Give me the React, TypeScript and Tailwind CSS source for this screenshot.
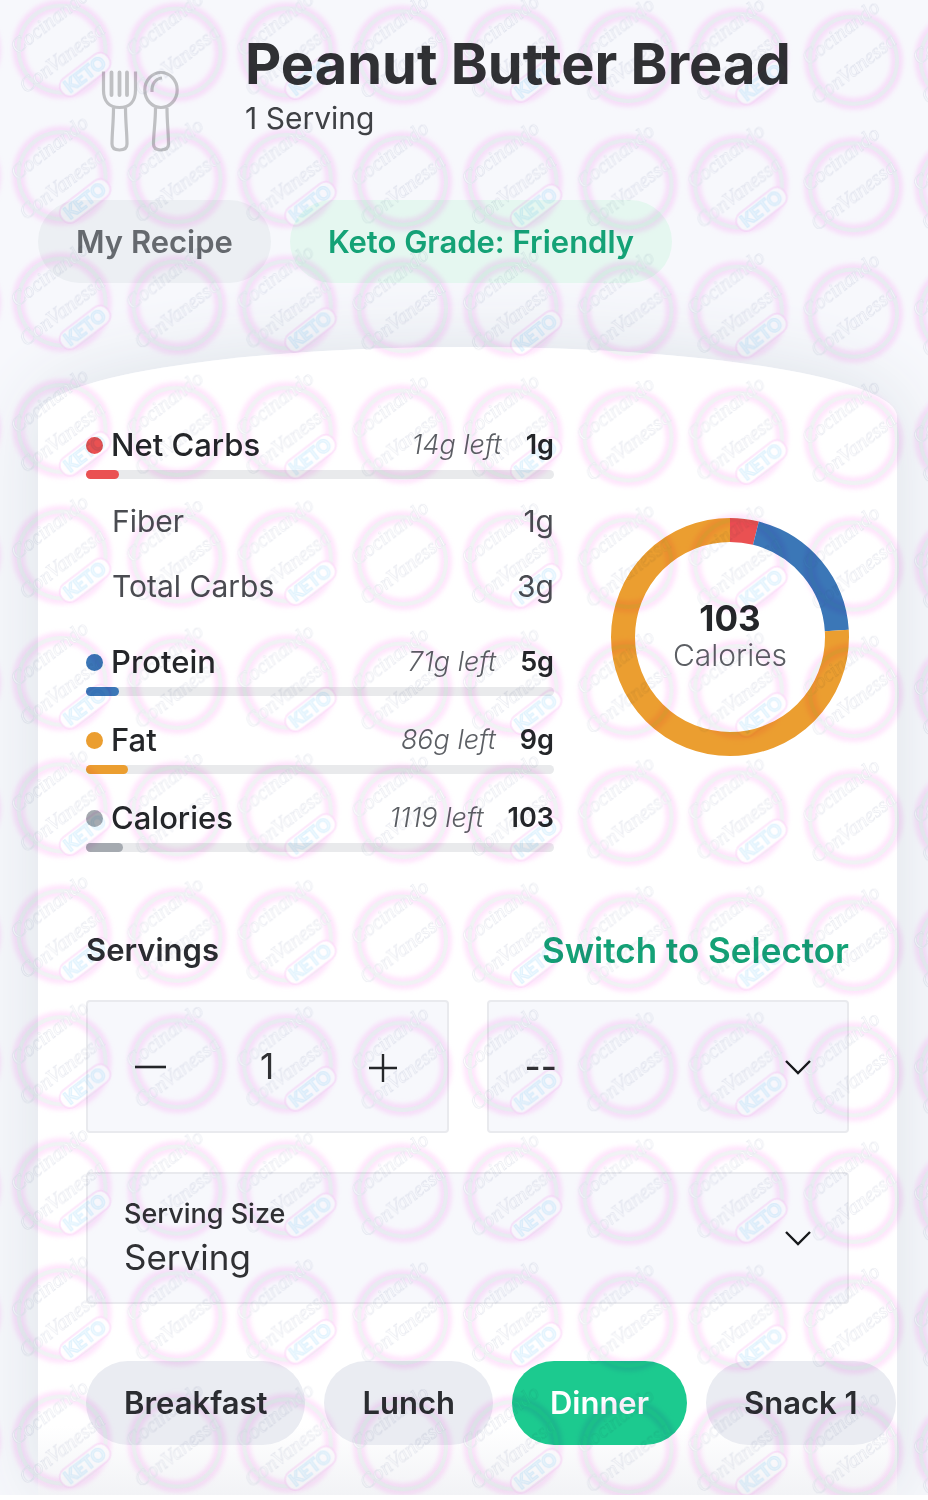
import { useState } from "react";

type Macro = {
  label: string;
  left: string;
  value: string;
  percent: number;
  dot: string;
};

const carbs: Macro = { label: "Net Carbs", left: "14g left", value: "1g", percent: 7, dot: "bg-[#ea5152]" };

const carbDetails = [
  { label: "Fiber", value: "1g" },
  { label: "Total Carbs", value: "3g" },
];

const macros: Macro[] = [
  { label: "Protein", left: "71g left", value: "5g", percent: 7, dot: "bg-[#3b77b7]" },
  { label: "Fat", left: "86g left", value: "9g", percent: 9, dot: "bg-[#eb9e30]" },
  { label: "Calories", left: "1119 left", value: "103", percent: 8, dot: "bg-[#a5aab0]" },
];

const meals = ["Breakfast", "Lunch", "Dinner", "Snack 1"];

function MacroRow({ macro }: { macro: Macro }) {
  return (
    <div>
      <div className="flex h-10 items-center">
        <span className={`mr-2 size-[17px] shrink-0 rounded-full ${macro.dot}`} />
        <span className="text-[31px] leading-10 font-medium text-[#242629]">{macro.label}</span>
        <span className="ml-auto text-[27px] leading-10 font-light text-[#5c5f64] italic">{macro.left}</span>
        <span className="ml-6 text-[27px] leading-10 font-semibold text-[#242629]">{macro.value}</span>
      </div>
      <div className="mt-[5px] h-[9px] rounded-full bg-[#e9eaec]">
        <div className={`h-full rounded-full ${macro.dot}`} style={{ width: `${macro.percent}%` }} />
      </div>
    </div>
  );
}

function Utensils() {
  return (
    <svg viewBox="98 66 84 90" className="h-[90px] w-[84px]" fill="none" stroke="#bfc0c3" strokeWidth="3.2" strokeLinecap="butt" aria-hidden="true">
      <path d="M103.500 71.500V90C103.500 101 109 107.500 119.500 107.500S135.500 101 135.500 90V71.500" />
      <path d="M111.500 72.500V95M119.500 72.500V95M127 72.500V95" strokeLinecap="round" strokeWidth="3.800" />
      <path d="M113.500 108C113.500 122 112 133 112 144C112 148 115 150 119.500 150S127 148 127 144C127 133 125.500 122 125.500 108" />
      <ellipse cx="161" cy="90" rx="16.200" ry="17.500" />
      <path d="M152 92C151.500 84 155.500 78.500 162 78" />
      <path d="M155.500 108C155.500 122 153.500 133 153.500 144C153.500 148 156.500 150 161 150S168.500 148 168.500 144C168.500 133 167 122 167 108" />
    </svg>
  );
}

function Chevron() {
  return (
    <svg viewBox="0 0 26 16" className="pointer-events-none absolute top-1/2 right-9 h-4 w-[26px] -translate-y-1/2" fill="none" stroke="#17191c" strokeWidth="2.4" aria-hidden="true">
      <path d="M1 2L13 14L25 2" />
    </svg>
  );
}

function Donut() {
  const segments = [
    { color: "#ea5152", from: 0, size: 3.9 },
    { color: "#3b77b7", from: 3.9, size: 20.1 },
    { color: "#eb9e30", from: 24, size: 76 },
  ];
  return (
    <div className="mb-1 grid size-[238px] shrink-0 place-items-center">
      <svg viewBox="0 0 238 238" className="col-start-1 row-start-1 size-full -rotate-90" fill="none" aria-hidden="true">
        {segments.map((s) => (
          <circle
            key={s.color}
            cx="119"
            cy="119"
            r="107"
            stroke={s.color}
            strokeWidth="24"
            pathLength="100"
            strokeDasharray={`${s.size} ${100 - s.size}`}
            strokeDashoffset={-s.from}
          />
        ))}
      </svg>
      <div className="col-start-1 row-start-1 text-center">
        <div className="text-[35px] leading-[37px] font-bold text-[#242629]">103</div>
        <div className="text-[30px] leading-[37px] font-light text-[#5c5f64]">Calories</div>
      </div>
    </div>
  );
}

function Badge({ keto }: { keto?: boolean }) {
  return (
    <g>
      <circle r="43.500" stroke="#ffa3f5" strokeWidth="12" fill="none" opacity="0.28" filter="url(#glow)" />
      <circle r="43.500" stroke="#eff4f3" strokeWidth="4" fill="none" opacity="0.9" />
      <g
        fill="#ffffff"
        stroke="#e6e8ef"
        strokeWidth="0.6"
        opacity="0.9"
        fontFamily="'Liberation Serif', serif"
        fontStyle="italic"
        fontSize="21"
      >
        <text transform="translate(-45 6) rotate(-38)">Cocinando</text>
        <text transform="translate(-36 45) rotate(-38)">Con</text>
        <text transform="translate(-9 24) rotate(-38)">Vanessa</text>
      </g>
      {keto && (
        <g transform="translate(23 25) rotate(-38)">
          <rect x="-29" y="-10" width="58" height="20" rx="9" fill="#ffffff" fillOpacity="0.9" stroke="#fbcdf6" strokeOpacity="0.45" strokeWidth="2" />
          <text y="6" textAnchor="middle" fill="#f2faff" stroke="#dff2fd" strokeWidth="1.2" fontFamily="Lato, sans-serif" fontWeight="700" fontSize="18">
            KETO
          </text>
        </g>
      )}
    </g>
  );
}

function Watermark() {
  return (
    <svg className="pointer-events-none absolute inset-0 size-full mix-blend-multiply" aria-hidden="true">
      <defs>
        <filter id="glow" x="-20%" y="-20%" width="140%" height="140%">
          <feGaussianBlur stdDeviation="2" />
        </filter>
        <pattern id="badges" x="7" y="-15" width="225.500" height="126.450" patternUnits="userSpaceOnUse" patternTransform="skewY(0.690)">
          <g transform="translate(55 63.500)">
            <Badge keto />
          </g>
          <g transform="translate(170 65)">
            <Badge />
          </g>
        </pattern>
      </defs>
      <rect width="100%" height="100%" fill="url(#badges)" />
    </svg>
  );
}

export default function App() {
  const [servings, setServings] = useState(1);
  const [meal, setMeal] = useState("Dinner");

  return (
    <div className="bg-white pb-1 font-[Inter,sans-serif]">
      <div className="relative overflow-hidden bg-[#f7f8fc]">
        <header className="px-[38px] pt-[35px]">
          <div className="flex">
            <div className="flex w-[207px] shrink-0 justify-center pt-[31px] pr-1">
              <Utensils />
            </div>
            <div>
              <h1 className="text-[56px] leading-[58px] font-bold text-[#303134]">Peanut Butter Bread</h1>
              <p className="text-[30px] leading-[51px] text-[#3f4145]">1 Serving</p>
            </div>
          </div>
          <div className="mt-11 flex gap-[19px] text-[31px] leading-[83px] font-semibold">
            <span className="rounded-full bg-[#eceff3] px-[38px] text-[#65696e]">My Recipe</span>
            <span className="rounded-full bg-[#e5f7f0] px-[38px] text-[#14a276]">Keto Grade: Friendly</span>
          </div>
        </header>

        <main className="mt-16 mr-[31px] ml-[38px] bg-linear-to-b from-white from-94% to-[#f2f3f6] pt-[78px] pb-[50px] shadow-[0_0_72px_#dce2e8] [border-radius:50%_50%_0_0/70px_70px_0_0]">
          <section className="flex items-center justify-between gap-14 px-12">
            <div className="max-w-[468px] flex-1">
              <MacroRow macro={carbs} />
              <dl className="mt-[10px] mb-[23px] pl-[26px] text-[30px] leading-[65px] text-[#4a4c51]">
                {carbDetails.map((d) => (
                  <div key={d.label} className="flex justify-between">
                    <dt>{d.label}</dt>
                    <dd>{d.value}</dd>
                  </div>
                ))}
              </dl>
              <div className="flex flex-col gap-6">
                {macros.map((m) => (
                  <MacroRow key={m.label} macro={m} />
                ))}
              </div>
            </div>
            <Donut />
          </section>

          <section className="mt-[73px] px-12">
            <div className="flex h-[50px] items-center justify-between">
              <label htmlFor="servings" className="text-[31px] font-semibold text-[#2b2d31]">
                Servings
              </label>
              <button type="button" className="text-[35px] font-semibold text-[#14a276]">
                Switch to Selector
              </button>
            </div>
            <div className="mt-[25px] grid grid-cols-2 gap-[38px]">
              <div className="grid h-[133px] grid-cols-3 rounded-sm border-2 border-[#e9eaee] bg-[#f7f8fc] px-1">
                <button type="button" aria-label="Decrease servings" className="grid place-items-center" onClick={() => setServings(Math.max(1, servings - 1))}>
                  <svg viewBox="0 0 32 32" className="size-8" stroke="#242629" strokeWidth="2.6" aria-hidden="true">
                    <path d="M1 16H32" />
                  </svg>
                </button>
                <input
                  id="servings"
                  inputMode="numeric"
                  className="w-full min-w-0 bg-transparent text-center text-[35px] text-[#303134] outline-none"
                  value={servings}
                  onChange={(e) => setServings(Number(e.target.value) || 1)}
                />
                <button type="button" aria-label="Increase servings" className="grid place-items-center" onClick={() => setServings(servings + 1)}>
                  <svg viewBox="0 0 32 32" className="size-8" stroke="#242629" strokeWidth="2.4" aria-hidden="true">
                    <path d="M1 17H29M15 3V31" />
                  </svg>
                </button>
              </div>
              <div className="relative h-[133px] rounded-sm border-2 border-[#e9eaee] bg-[#f7f8fc]">
                <select aria-label="Fraction" className="size-full appearance-none bg-transparent px-9 text-[35px] font-medium text-[#303134] outline-none">
                  <option>--</option>
                  <option>1/4</option>
                  <option>1/2</option>
                  <option>3/4</option>
                </select>
                <Chevron />
              </div>
            </div>
            <div className="relative mt-[39px] h-[132px] rounded-sm border-2 border-[#e9eaee] bg-[#f7f8fc] px-9 pt-6">
              <label htmlFor="serving-size" className="block text-[27px] leading-8 font-medium text-[#303134]">
                Serving Size
              </label>
              <select id="serving-size" className="block h-[54px] w-full appearance-none bg-transparent text-[35px] text-[#303134] outline-none">
                <option>Serving</option>
              </select>
              <Chevron />
            </div>
          </section>

          <div className="mt-[57px] flex gap-[19px] overflow-hidden pl-12">
            {meals.map((m) => (
              <button
                key={m}
                type="button"
                aria-pressed={m === meal}
                onClick={() => setMeal(m)}
                className={`h-[84px] shrink-0 rounded-full px-[38px] text-[31px] font-semibold ${
                  m === meal ? "bg-[#1cca8f] text-white" : "bg-[#eaecf2] text-[#2b2d31]"
                }`}
              >
                {m}
              </button>
            ))}
          </div>
        </main>
        <Watermark />
      </div>
    </div>
  );
}
